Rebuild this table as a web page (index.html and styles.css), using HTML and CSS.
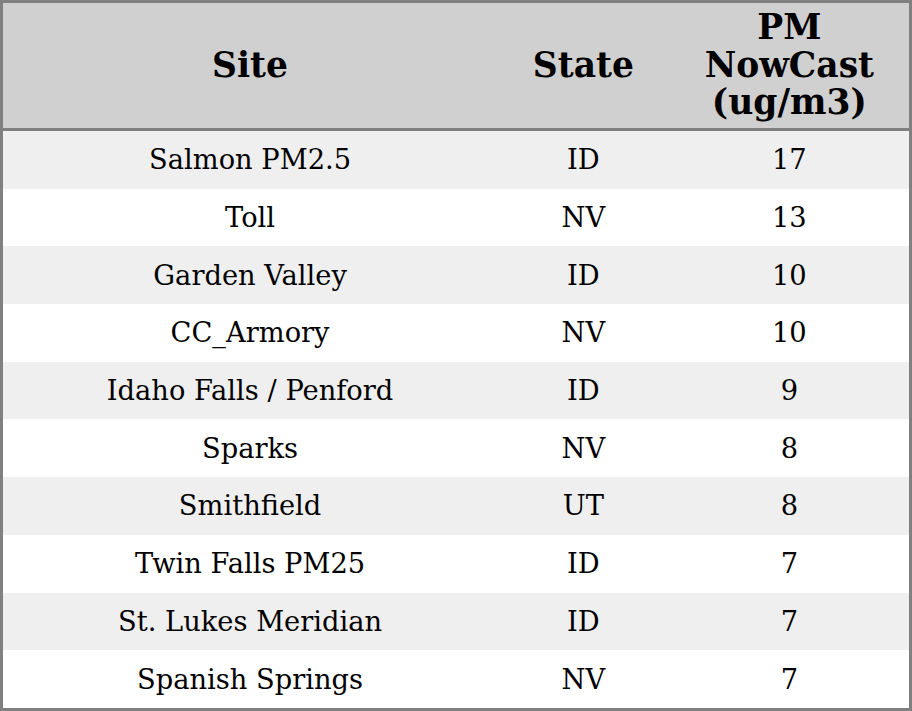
FILE: index.html
```html
<!DOCTYPE html>
<html>
<head>
<meta charset="utf-8">
<link rel="stylesheet" href="styles.css">
</head>
<body>
<table class="aq">
  <colgroup>
    <col class="c-site">
    <col class="c-state">
    <col class="c-pm">
  </colgroup>
  <thead>
    <tr><th>Site</th><th>State</th><th>PM<br>NowCast<br>(ug/m3)</th></tr>
  </thead>
  <tbody>
    <tr><td>Salmon PM2.5</td><td>ID</td><td>17</td></tr>
    <tr><td>Toll</td><td>NV</td><td>13</td></tr>
    <tr><td>Garden Valley</td><td>ID</td><td>10</td></tr>
    <tr><td>CC_Armory</td><td>NV</td><td>10</td></tr>
    <tr><td>Idaho Falls / Penford</td><td>ID</td><td>9</td></tr>
    <tr><td>Sparks</td><td>NV</td><td>8</td></tr>
    <tr><td>Smithfield</td><td>UT</td><td>8</td></tr>
    <tr><td>Twin Falls PM25</td><td>ID</td><td>7</td></tr>
    <tr><td>St. Lukes Meridian</td><td>ID</td><td>7</td></tr>
    <tr><td>Spanish Springs</td><td>NV</td><td>7</td></tr>
  </tbody>
</table>
</body>
</html>
```
FILE: styles.css
```css
html, body {
  margin: 0;
  padding: 0;
  background: #ffffff;
}
.aq {
  width: 912px;
  height: 711px;
  border-collapse: collapse;
  border: 3px solid #808080;
  font-family: "DejaVu Serif", serif;
  color: #000;
  table-layout: fixed;
}
.c-site { width: 494px; }
.c-state { width: 172px; }
.c-pm { width: 240px; }
.aq th {
  background: #d0d0d0;
  font-size: 34.5px;
  font-weight: bold;
  line-height: 37.5px;
  height: 125px;
  padding: 0;
  text-align: center;
  border-bottom: 3px solid #808080;
}
.aq td {
  font-size: 27.3px;
  text-align: center;
  padding: 0;
  height: 57.7px;
}
.aq tbody tr:nth-child(odd) td {
  background: #efefef;
}
```
